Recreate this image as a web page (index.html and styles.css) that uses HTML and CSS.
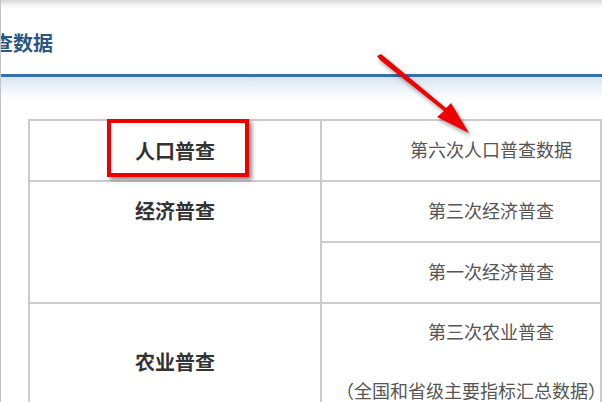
FILE: index.html
```html
<!DOCTYPE html>
<html lang="zh-CN">
<head>
    <meta charset="UTF-8">
    <meta name="viewport" content="width=device-width, initial-scale=1.0">
    <title>普查数据</title>
    <link rel="stylesheet" href="styles.css">
</head>
<body>
    <div class="page">
        <div class="header">
            <h1 class="title">普查数据</h1>
        </div>
        <div class="header-glow"></div>

        <div class="census">
            <div class="cell cell-name">人口普查</div>
            <div class="cell cell-item">第六次人口普查数据</div>

            <div class="cell cell-name cell-top span-2">经济普查</div>
            <div class="cell cell-item">第三次经济普查</div>
            <div class="cell cell-item">第一次经济普查</div>

            <div class="cell cell-name cell-top cell-agri">农业普查</div>
            <div class="cell cell-item cell-top cell-agri-items">
                <div>第三次农业普查</div>
                <div class="note">（全国和省级主要指标汇总数据）</div>
            </div>
        </div>

        <!-- annotations drawn over the page -->
        <div class="mark-box"></div>
        <svg class="arrow" width="602" height="402" viewBox="0 0 602 402">
            <polygon points="377,56 380,60 444,111 437,117 469,133 451,103 446,108 381,54" fill="#ee0000"/>
        </svg>
    </div>
</body>
</html>
```

FILE: styles.css
```css
* {
    margin: 0;
    padding: 0;
    box-sizing: border-box;
}

html, body {
    width: 602px;
    height: 402px;
    overflow: hidden;
    background: #fff;
}

body {
    font-family: "Noto Sans CJK SC", "Noto Sans", sans-serif;
}

.page {
    position: relative;
    height: 402px;
    border-left: 1px solid #c4c4c4;
    background: linear-gradient(#d6d6d6 0, #f4f4f4 5px, #fff 10px, #fff 100%);
    overflow: hidden;
}

.header {
    height: 77px;
    padding-top: 32px;
    border-bottom: 3px solid #3670ae;
}

.title {
    margin-left: -28px;
    font-size: 20px;
    line-height: 22px;
    font-weight: bold;
    color: #2a5784;
    white-space: nowrap;
}

.header-glow {
    height: 22px;
    background: linear-gradient(#d8e5f3, #fff);
}

.census {
    display: grid;
    grid-template-columns: 292px 280px;
    grid-template-rows: 61px 61px 61px 120px;
    margin: 20px 0 0 27px;
    width: 574px;
    border-top: 2px solid #cbcbcb;
    border-left: 2px solid #cbcbcb;
}

.cell {
    display: flex;
    align-items: center;
    justify-content: center;
    border-right: 2px solid #cbcbcb;
    border-bottom: 2px solid #cbcbcb;
    line-height: 30px;
    white-space: nowrap;
}

.cell-name {
    font-size: 20px;
    font-weight: bold;
    color: #333;
}

.cell-item {
    padding-left: 60px;
    padding-bottom: 4px;
    font-size: 18px;
    color: #555;
}

.cell-top {
    align-items: flex-start;
    padding-top: 14px;
}

.span-2 {
    grid-row: span 2;
}

.cell-agri {
    padding-top: 43px;
}

.cell-agri-items {
    flex-direction: column;
    align-items: center;
    justify-content: flex-start;
    padding-top: 12px;
}

.note {
    margin-top: 29px;
    align-self: flex-start;
    margin-left: -46px;
}

.mark-box {
    position: absolute;
    left: 106px;
    top: 119px;
    width: 142px;
    height: 58px;
    border: 4px solid #ee0000;
    box-shadow: 3px 3px 4px rgba(0, 0, 0, 0.45);
}

.arrow {
    position: absolute;
    left: -1px;
    top: 0;
    filter: drop-shadow(2px 3px 2px rgba(0, 0, 0, 0.4));
}
```
